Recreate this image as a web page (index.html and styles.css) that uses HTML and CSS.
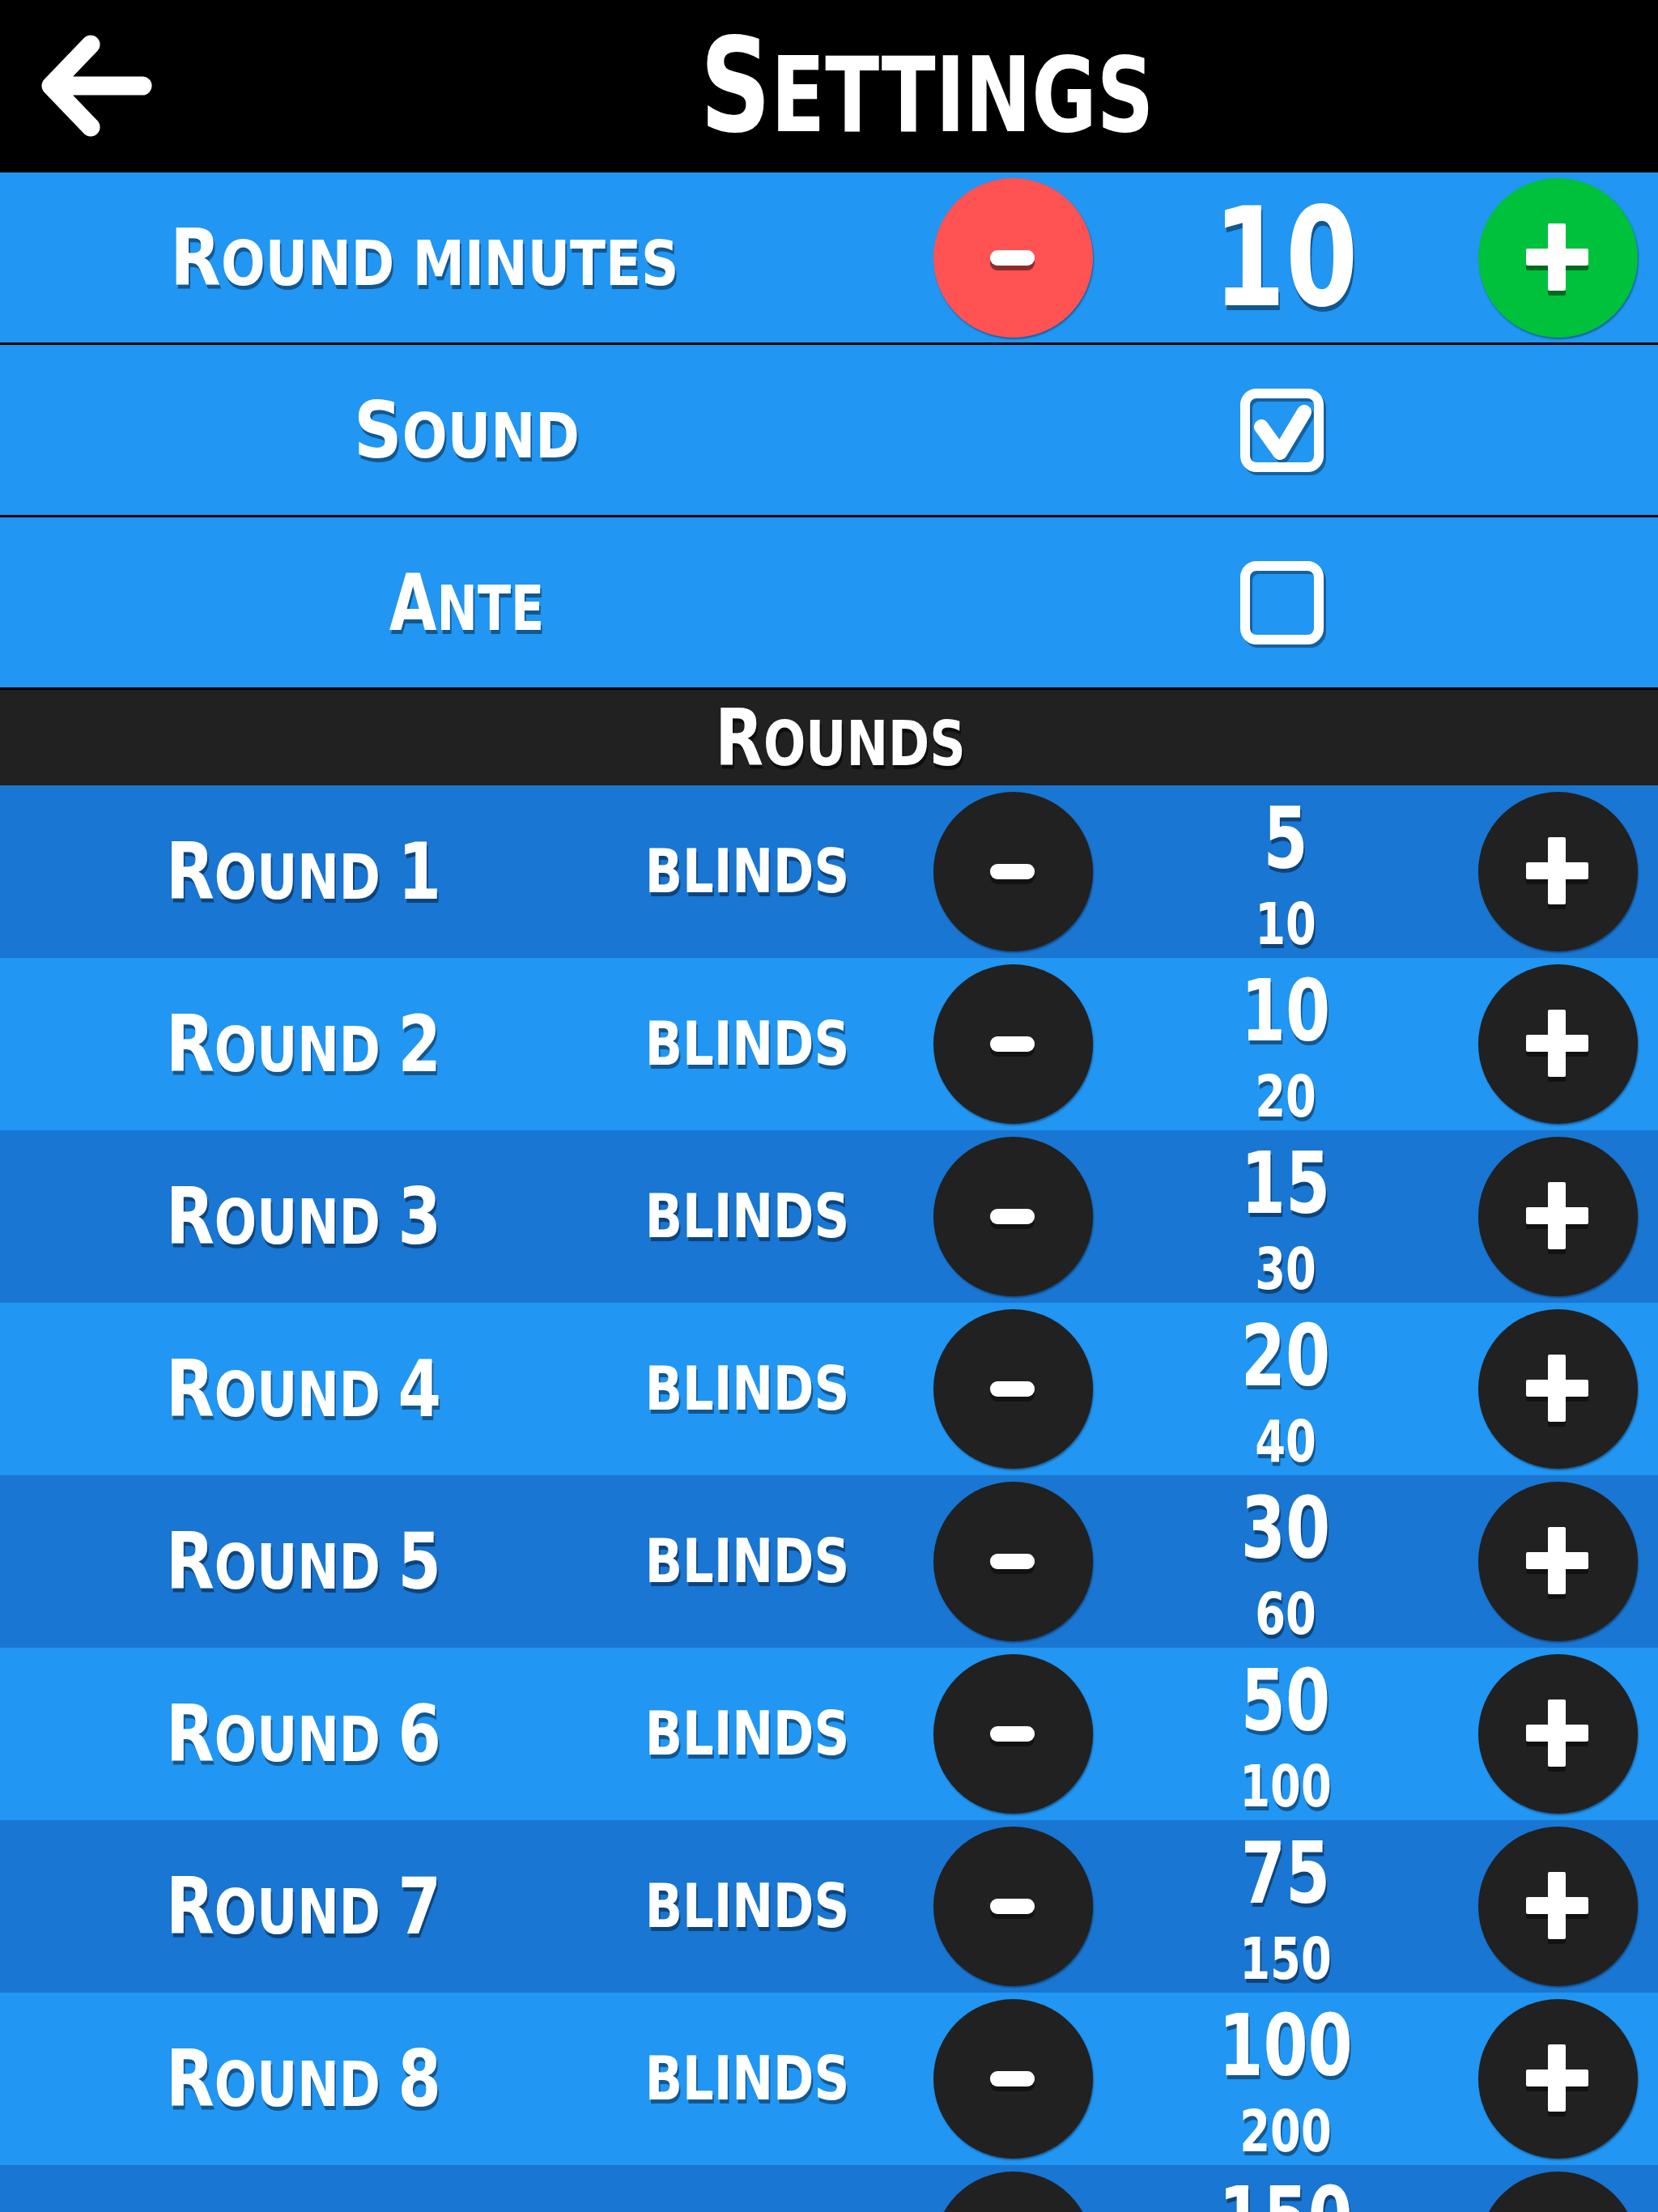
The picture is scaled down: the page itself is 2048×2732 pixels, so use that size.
FILE: index.html
```html
<!DOCTYPE html>
<html lang="en">
<head>
<meta charset="utf-8">
<title>Settings</title>
<link rel="stylesheet" href="styles.css">
</head>
<body>
<div class="app">
  <header class="topbar">
    <button class="back" aria-label="Back">
      <svg width="242" height="213" viewBox="0 0 242 213"><path d="M176 106 H63 M112 55 L63 106 L112 157" fill="none" stroke="#fff" stroke-width="23" stroke-linecap="round" stroke-linejoin="round"/></svg>
    </button>
    <h1 class="title">Settings</h1>
  </header>

  <section class="settings">
    <div class="setting">
      <div class="label label-shift">Round minutes</div>
      <button class="circle red" aria-label="Decrease"><svg class="glyph" viewBox="0 0 197 197"><rect x="70" y="95" width="55" height="19" rx="9" class="gs"/><rect x="70" y="89" width="55" height="19" rx="9" class="gw"/></svg></button>
      <div class="value-big">10</div>
      <button class="circle green" aria-label="Increase"><svg class="glyph" viewBox="0 0 197 197"><rect x="86" y="62" width="22" height="83" rx="2" class="gs"/><rect x="59" y="93" width="77" height="21" rx="2" class="gs"/><rect x="86" y="56" width="22" height="83" rx="2" class="gw"/><rect x="59" y="87" width="77" height="21" rx="2" class="gw"/></svg></button>
    </div>
    <div class="setting">
      <div class="label label-sound">Sound</div>
      <div class="check-cell"><span class="checkbox"><svg class="tick" width="79" height="79" viewBox="0 0 79 79"><path d="M14 35 L37 67 L67 17" fill="none" stroke="#fff" stroke-width="18" stroke-linecap="round" stroke-linejoin="round"/></svg></span></div>
    </div>
    <div class="setting">
      <div class="label label-ante">Ante</div>
      <div class="check-cell"><span class="checkbox"></span></div>
    </div>
  </section>

  <div class="section-head"><h2 class="section-title">Rounds</h2></div>

  <section class="rounds">
    <div class="round">
      <div class="label">Round <span class="num">1</span></div>
      <div class="blinds">blinds</div>
      <button class="circle dark" aria-label="Decrease"><svg class="glyph" viewBox="0 0 197 197"><rect x="70" y="95" width="55" height="19" rx="9" class="gs"/><rect x="70" y="89" width="55" height="19" rx="9" class="gw"/></svg></button>
      <div class="stack"><span class="hi">5</span><span class="lo">10</span></div>
      <button class="circle dark" aria-label="Increase"><svg class="glyph" viewBox="0 0 197 197"><rect x="86" y="62" width="22" height="83" rx="2" class="gs"/><rect x="59" y="93" width="77" height="21" rx="2" class="gs"/><rect x="86" y="56" width="22" height="83" rx="2" class="gw"/><rect x="59" y="87" width="77" height="21" rx="2" class="gw"/></svg></button>
    </div>
    <div class="round">
      <div class="label">Round <span class="num">2</span></div>
      <div class="blinds">blinds</div>
      <button class="circle dark" aria-label="Decrease"><svg class="glyph" viewBox="0 0 197 197"><rect x="70" y="95" width="55" height="19" rx="9" class="gs"/><rect x="70" y="89" width="55" height="19" rx="9" class="gw"/></svg></button>
      <div class="stack"><span class="hi">10</span><span class="lo">20</span></div>
      <button class="circle dark" aria-label="Increase"><svg class="glyph" viewBox="0 0 197 197"><rect x="86" y="62" width="22" height="83" rx="2" class="gs"/><rect x="59" y="93" width="77" height="21" rx="2" class="gs"/><rect x="86" y="56" width="22" height="83" rx="2" class="gw"/><rect x="59" y="87" width="77" height="21" rx="2" class="gw"/></svg></button>
    </div>
    <div class="round">
      <div class="label">Round <span class="num">3</span></div>
      <div class="blinds">blinds</div>
      <button class="circle dark" aria-label="Decrease"><svg class="glyph" viewBox="0 0 197 197"><rect x="70" y="95" width="55" height="19" rx="9" class="gs"/><rect x="70" y="89" width="55" height="19" rx="9" class="gw"/></svg></button>
      <div class="stack"><span class="hi">15</span><span class="lo">30</span></div>
      <button class="circle dark" aria-label="Increase"><svg class="glyph" viewBox="0 0 197 197"><rect x="86" y="62" width="22" height="83" rx="2" class="gs"/><rect x="59" y="93" width="77" height="21" rx="2" class="gs"/><rect x="86" y="56" width="22" height="83" rx="2" class="gw"/><rect x="59" y="87" width="77" height="21" rx="2" class="gw"/></svg></button>
    </div>
    <div class="round">
      <div class="label">Round <span class="num">4</span></div>
      <div class="blinds">blinds</div>
      <button class="circle dark" aria-label="Decrease"><svg class="glyph" viewBox="0 0 197 197"><rect x="70" y="95" width="55" height="19" rx="9" class="gs"/><rect x="70" y="89" width="55" height="19" rx="9" class="gw"/></svg></button>
      <div class="stack"><span class="hi">20</span><span class="lo">40</span></div>
      <button class="circle dark" aria-label="Increase"><svg class="glyph" viewBox="0 0 197 197"><rect x="86" y="62" width="22" height="83" rx="2" class="gs"/><rect x="59" y="93" width="77" height="21" rx="2" class="gs"/><rect x="86" y="56" width="22" height="83" rx="2" class="gw"/><rect x="59" y="87" width="77" height="21" rx="2" class="gw"/></svg></button>
    </div>
    <div class="round">
      <div class="label">Round <span class="num">5</span></div>
      <div class="blinds">blinds</div>
      <button class="circle dark" aria-label="Decrease"><svg class="glyph" viewBox="0 0 197 197"><rect x="70" y="95" width="55" height="19" rx="9" class="gs"/><rect x="70" y="89" width="55" height="19" rx="9" class="gw"/></svg></button>
      <div class="stack"><span class="hi">30</span><span class="lo">60</span></div>
      <button class="circle dark" aria-label="Increase"><svg class="glyph" viewBox="0 0 197 197"><rect x="86" y="62" width="22" height="83" rx="2" class="gs"/><rect x="59" y="93" width="77" height="21" rx="2" class="gs"/><rect x="86" y="56" width="22" height="83" rx="2" class="gw"/><rect x="59" y="87" width="77" height="21" rx="2" class="gw"/></svg></button>
    </div>
    <div class="round">
      <div class="label">Round <span class="num">6</span></div>
      <div class="blinds">blinds</div>
      <button class="circle dark" aria-label="Decrease"><svg class="glyph" viewBox="0 0 197 197"><rect x="70" y="95" width="55" height="19" rx="9" class="gs"/><rect x="70" y="89" width="55" height="19" rx="9" class="gw"/></svg></button>
      <div class="stack"><span class="hi">50</span><span class="lo">100</span></div>
      <button class="circle dark" aria-label="Increase"><svg class="glyph" viewBox="0 0 197 197"><rect x="86" y="62" width="22" height="83" rx="2" class="gs"/><rect x="59" y="93" width="77" height="21" rx="2" class="gs"/><rect x="86" y="56" width="22" height="83" rx="2" class="gw"/><rect x="59" y="87" width="77" height="21" rx="2" class="gw"/></svg></button>
    </div>
    <div class="round">
      <div class="label">Round <span class="num">7</span></div>
      <div class="blinds">blinds</div>
      <button class="circle dark" aria-label="Decrease"><svg class="glyph" viewBox="0 0 197 197"><rect x="70" y="95" width="55" height="19" rx="9" class="gs"/><rect x="70" y="89" width="55" height="19" rx="9" class="gw"/></svg></button>
      <div class="stack"><span class="hi">75</span><span class="lo">150</span></div>
      <button class="circle dark" aria-label="Increase"><svg class="glyph" viewBox="0 0 197 197"><rect x="86" y="62" width="22" height="83" rx="2" class="gs"/><rect x="59" y="93" width="77" height="21" rx="2" class="gs"/><rect x="86" y="56" width="22" height="83" rx="2" class="gw"/><rect x="59" y="87" width="77" height="21" rx="2" class="gw"/></svg></button>
    </div>
    <div class="round">
      <div class="label">Round <span class="num">8</span></div>
      <div class="blinds">blinds</div>
      <button class="circle dark" aria-label="Decrease"><svg class="glyph" viewBox="0 0 197 197"><rect x="70" y="95" width="55" height="19" rx="9" class="gs"/><rect x="70" y="89" width="55" height="19" rx="9" class="gw"/></svg></button>
      <div class="stack"><span class="hi">100</span><span class="lo">200</span></div>
      <button class="circle dark" aria-label="Increase"><svg class="glyph" viewBox="0 0 197 197"><rect x="86" y="62" width="22" height="83" rx="2" class="gs"/><rect x="59" y="93" width="77" height="21" rx="2" class="gs"/><rect x="86" y="56" width="22" height="83" rx="2" class="gw"/><rect x="59" y="87" width="77" height="21" rx="2" class="gw"/></svg></button>
    </div>
    <div class="round">
      <div class="label">Round <span class="num">9</span></div>
      <div class="blinds">blinds</div>
      <button class="circle dark" aria-label="Decrease"><svg class="glyph" viewBox="0 0 197 197"><rect x="70" y="95" width="55" height="19" rx="9" class="gs"/><rect x="70" y="89" width="55" height="19" rx="9" class="gw"/></svg></button>
      <div class="stack"><span class="hi">150</span><span class="lo">300</span></div>
      <button class="circle dark" aria-label="Increase"><svg class="glyph" viewBox="0 0 197 197"><rect x="86" y="62" width="22" height="83" rx="2" class="gs"/><rect x="59" y="93" width="77" height="21" rx="2" class="gs"/><rect x="86" y="56" width="22" height="83" rx="2" class="gw"/><rect x="59" y="87" width="77" height="21" rx="2" class="gw"/></svg></button>
    </div>
  </section>
</div>
</body>
</html>
```

FILE: styles.css
```css
html, body {
  margin: 0;
  padding: 0;
  background: #2196f3;
}

body {
  font-family: "DejaVu Sans Condensed", "DejaVu Sans", sans-serif;
  font-weight: 700;
  font-stretch: condensed;
  color: #fff;
  overflow: hidden;
}

.app {
  width: 2048px;
}

button {
  border: 0;
  padding: 0;
  margin: 0;
  background: none;
  font: inherit;
  color: inherit;
}

/* ---------- top bar ---------- */
.topbar {
  display: flex;
  align-items: center;
  height: 213px;
  background: #000;
}

.back {
  width: 242px;
  height: 213px;
  display: block;
}

.back svg {
  display: block;
}

.title {
  flex: 1;
  margin: 0;
  text-align: center;
  text-transform: uppercase;
  font-size: 129px;
  font-weight: 700;
  line-height: 1;
  transform: scaleX(0.845);
}

.title::first-letter {
  font-size: 160px;
}

/* ---------- labels ---------- */
.label,
.section-title {
  text-transform: uppercase;
  font-size: 77px;
  line-height: 1;
  text-align: center;
  text-shadow: 2px 5px 0 rgba(0, 0, 0, 0.42);
  transform: scaleX(0.89);
}

.label::first-letter,
.section-title::first-letter {
  font-size: 97px;
}

.label .num {
  font-size: 96px;
}

/* ---------- settings ---------- */
.setting {
  display: grid;
  grid-template-columns: 1153px 197px 1fr 197px 25px;
  align-items: center;
  height: 210px;
  border-bottom: 3px solid #000;
  background: #2196f3;
}

.label-shift {
  padding-right: 112px;
  transform: scaleX(0.93);
}

.label-sound {
  transform: scaleX(0.95);
}

.label-ante {
  transform: scaleX(0.87);
}

.value-big {
  text-align: center;
  font-size: 170px;
  line-height: 1;
  text-shadow: 2px 6px 0 rgba(0, 0, 0, 0.42);
  transform: scaleX(0.84);
}

.check-cell {
  grid-column: 2 / 5;
  justify-self: center;
  margin-right: 10px;
}

.checkbox {
  display: block;
  box-sizing: border-box;
  width: 103px;
  height: 103px;
  border: 12px solid #fff;
  border-radius: 20px;
  filter: drop-shadow(3px 4px 0 rgba(0, 0, 0, 0.35));
}

.tick {
  display: block;
  overflow: visible;
}

/* ---------- circles ---------- */
.circle {
  display: block;
  width: 197px;
  height: 197px;
  border-radius: 50%;
  box-shadow: 1px 2px 2px rgba(0, 0, 0, 0.35);
}

.circle.red { background: #ff5252; }
.circle.green { background: #00c13b; }
.circle.dark { background: #212121; }

.glyph {
  display: block;
  width: 197px;
  height: 197px;
}

.gw { fill: #fff; }
.gs { fill: rgba(0, 0, 0, 0.45); }

/* ---------- rounds ---------- */
.section-head {
  display: flex;
  align-items: center;
  justify-content: center;
  height: 118px;
  padding-left: 28px;
  background: #212121;
}

.section-title {
  display: inline-block;
  margin: 0;
  font-weight: 700;
  text-shadow: 2px 5px 0 rgba(0, 0, 0, 0.6);
}

.round {
  display: grid;
  grid-template-columns: 750px 346px 57px 197px 1fr 197px 25px;
  align-items: center;
  height: 213px;
  background: #1976d2;
}

.round:nth-child(even) {
  background: #2196f3;
}

.round .label {
  grid-column: 1;
}

.blinds {
  text-transform: uppercase;
  font-size: 75px;
  line-height: 1;
  text-align: center;
  text-shadow: 2px 5px 0 rgba(0, 0, 0, 0.42);
  transform: scaleX(0.9);
}

.round .circle:nth-of-type(1) {
  grid-column: 4;
}

.stack {
  align-self: stretch;
  display: flex;
  flex-direction: column;
  align-items: center;
  text-shadow: 2px 5px 0 rgba(0, 0, 0, 0.42);
  transform: scaleX(0.84);
}

.hi {
  font-size: 105px;
  line-height: 132px;
}

.lo {
  font-size: 72px;
  line-height: 78px;
}
```
